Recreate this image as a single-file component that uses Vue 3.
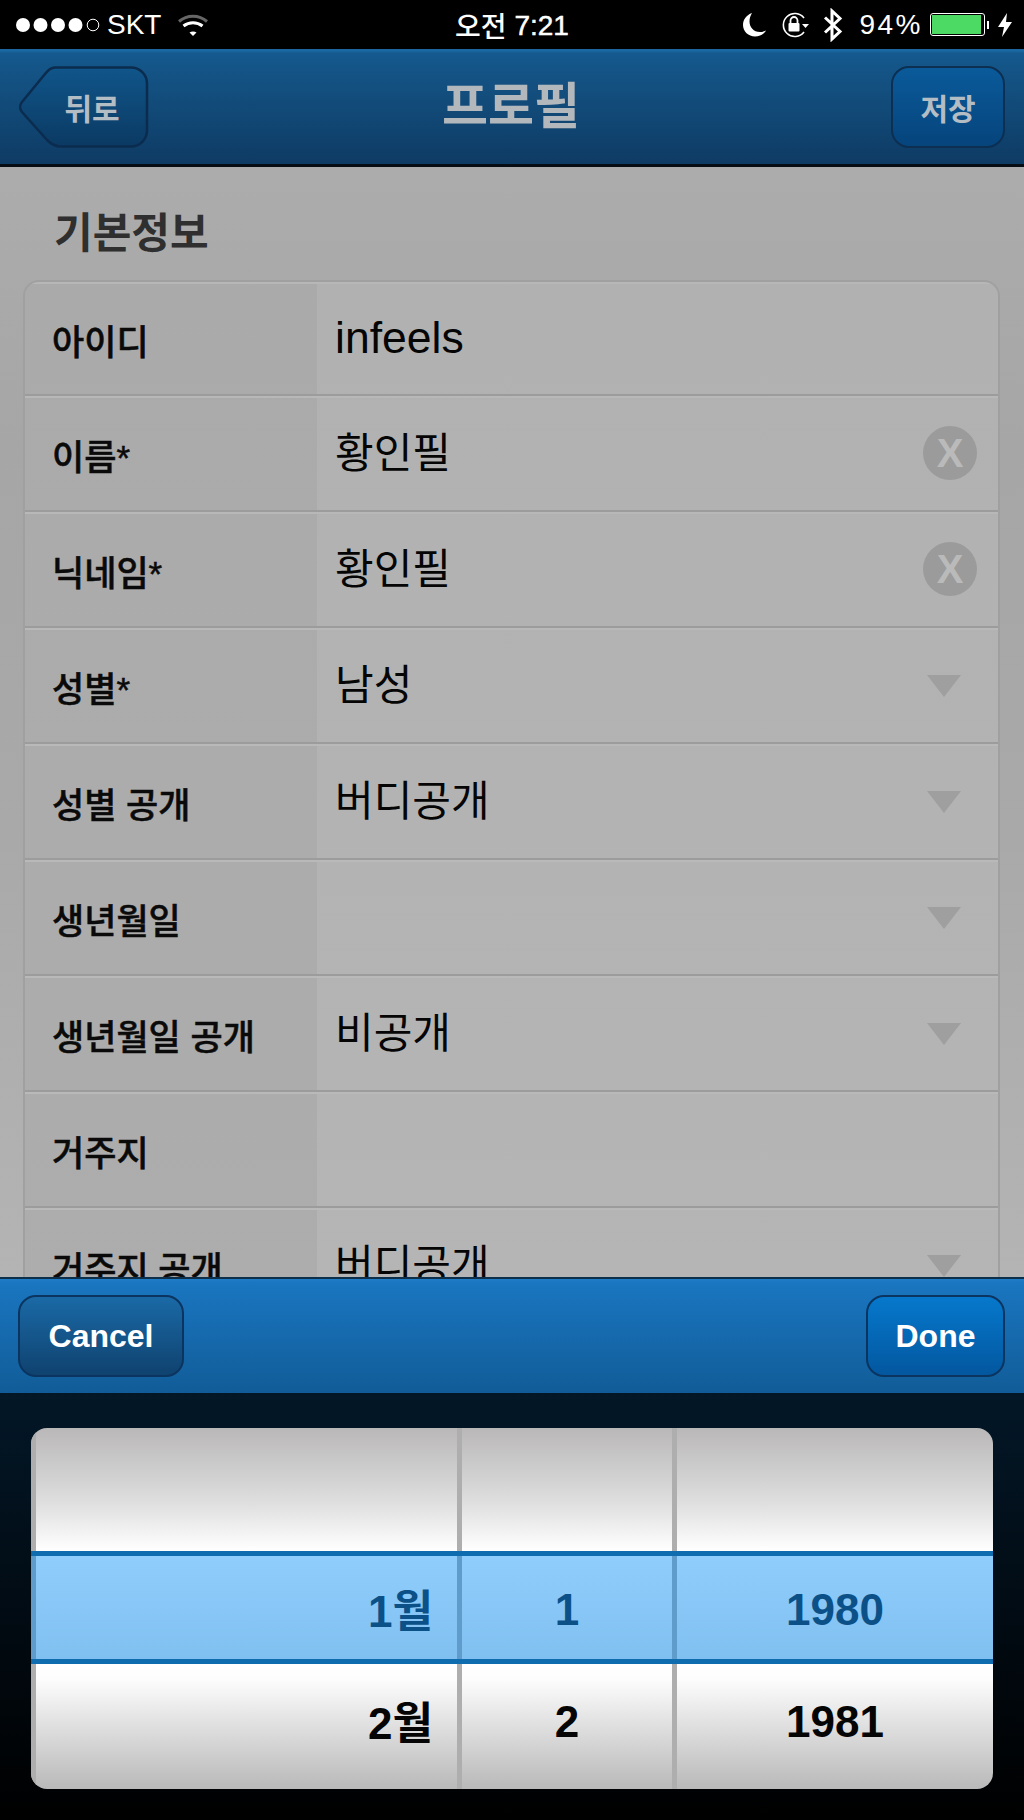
<script setup>
const rows = [
  { label: '아이디', value: 'infeels', latin: true },
  { label: '이름*', value: '황인필', icon: 'clear' },
  { label: '닉네임*', value: '황인필', icon: 'clear' },
  { label: '성별*', value: '남성', icon: 'drop' },
  { label: '성별 공개', value: '버디공개', icon: 'drop' },
  { label: '생년월일', value: '', icon: 'drop' },
  { label: '생년월일 공개', value: '비공개', icon: 'drop' },
  { label: '거주지', value: '' },
  { label: '거주지 공개', value: '버디공개', icon: 'drop' }
]
const pickerRows = [
  { cls: 'top', cells: ['', '', ''] },
  { cls: 'sel', cells: ['1월', '1', '1980'] },
  { cls: 'bottom', cells: ['2월', '2', '1981'] }
]
</script>

<template>
  <div class="screen">
    <header class="status">
      <div class="status-left">
        <svg class="dots" width="86" height="16" viewBox="0 0 86 16">
          <circle cx="7" cy="8" r="7" fill="#fff" />
          <circle cx="24.500" cy="8" r="7" fill="#fff" />
          <circle cx="42" cy="8" r="7" fill="#fff" />
          <circle cx="59.500" cy="8" r="7" fill="#fff" />
          <circle cx="77" cy="8" r="5.800" fill="none" stroke="#fff" stroke-width="1" />
        </svg>
        <span class="carrier">SKT</span>
        <svg class="wifi" width="32" height="24" viewBox="0 0 32 24">
          <path d="M2 8.500C10 1.500 22 1.500 30 8.500" fill="none" stroke="#666" stroke-width="3" />
          <path d="M6.500 13C12 8.500 20 8.500 25.500 13" fill="none" stroke="#fff" stroke-width="3" />
          <path d="M12.500 19.500L16 23L19.500 19.500C17.500 18 14.500 18 12.500 19.500Z" fill="#fff" />
        </svg>
      </div>
      <div class="time">오전 <span class="clock">7:21</span></div>
      <div class="status-right">
        <svg width="24" height="24" viewBox="0 0 24 24">
          <path d="M9 0C3.500 2 0 6.500 0 12C0 18.500 5.500 23.500 12 23.500C17 23.500 21 21 23 17.500C21.500 18.500 19 19 17 19C10.500 19 6.500 14 6.500 8.500C6.500 5 7.500 2.500 9 0Z" fill="#fff" />
        </svg>
        <svg class="lock" width="28" height="26" viewBox="0 0 28 26">
          <path d="M23 6A11.500 11.500 0 1 0 23 20" fill="none" stroke="#fff" stroke-width="1.600" />
          <path d="M21 12L28 12L24.500 16Z" fill="#fff" />
          <rect x="7.500" y="11" width="11" height="8.500" rx="1" fill="#fff" />
          <path d="M9.500 11.500V8.500A3.500 3.500 0 0 1 16.500 8.500V11.500" fill="none" stroke="#fff" stroke-width="1.800" />
        </svg>
        <svg class="bt" width="20" height="34" viewBox="0 0 20 34">
          <path d="M2 9.500L17 23.500L9 31V3L17 10.500L2 24.500" fill="none" stroke="#fff" stroke-width="3" />
        </svg>
        <span class="percent">94%</span>
        <div class="battery"><div class="battery-fill"></div></div>
        <div class="battery-tip"></div>
        <svg class="bolt" width="14" height="24" viewBox="0 0 14 24">
          <path d="M9 0L0 14H6L4 24L14 9H8Z" fill="#fff" />
        </svg>
      </div>
    </header>

    <nav class="nav">
      <button class="btn back">
        <svg class="back-shape" width="130" height="82" viewBox="0 0 130 82">
          <defs>
            <linearGradient id="backFill" x1="0" y1="0" x2="0" y2="1">
              <stop offset="0" stop-color="#10558a" />
              <stop offset="1" stop-color="#0b3a63" />
            </linearGradient>
          </defs>
          <path d="M36 1.500H112A16 16 0 0 1 128 17.500V64.500A16 16 0 0 1 112 80.500H42C36 80.500 32 78 28 74L3 46C0.500 43 0.500 39 3 36L26 8C29 4 32 1.500 36 1.500Z" fill="url(#backFill)" stroke="#0b2c4e" stroke-width="2.500" />
        </svg>
        <span class="back-text">뒤로</span>
      </button>
      <h1 class="title">프로필</h1>
      <button class="btn save">저장</button>
    </nav>

    <main class="content">
      <h2 class="heading">기본정보</h2>
      <section class="card">
        <div v-for="row in rows" :key="row.label" class="row">
          <div class="label">{{ row.label }}</div>
          <div class="value">
            <span class="text" :class="{ latin: row.latin }">{{ row.value }}</span>
            <span v-if="row.icon === 'clear'" class="clear">X</span>
            <span v-if="row.icon === 'drop'" class="drop"></span>
          </div>
        </div>
      </section>
    </main>

    <div class="toolbar">
      <button class="btn cancel">Cancel</button>
      <button class="btn done">Done</button>
    </div>

    <div class="picker">
      <div class="wheel">
        <div v-for="pr in pickerRows" :key="pr.cls" class="wheel-row" :class="pr.cls">
          <div class="cell month">{{ pr.cells[0] }}</div>
          <div class="cell day">{{ pr.cells[1] }}</div>
          <div class="cell year">{{ pr.cells[2] }}</div>
        </div>
      </div>
    </div>
  </div>
</template>

<style>
html, body { margin: 0; background: #000; }
</style>

<style scoped>
.screen {
  width: 1024px;
  height: 1820px;
  display: flex;
  flex-direction: column;
  overflow: hidden;
  font-family: "Liberation Sans", "Noto Sans CJK KR", sans-serif;
}

.status {
  height: 49px;
  flex: none;
  background: #000;
  color: #fff;
  display: grid;
  grid-template-columns: 1fr auto 1fr;
  align-items: center;
}
.status-left {
  display: flex;
  align-items: center;
  padding-left: 16px;
}
.carrier { font-size: 28px; margin-left: 5px; }
.wifi { margin-left: 16px; }
.time { font-size: 28px; font-weight: 500; }
.clock { vertical-align: 2px; -webkit-text-stroke: 0.5px #fff; }
.status-right {
  display: flex;
  align-items: center;
  justify-content: flex-end;
  padding-right: 12px;
}
.lock { margin-left: 14px; }
.bt { margin-left: 14px; }
.percent { font-size: 28px; margin-left: 16px; letter-spacing: 2.500px; }
.battery {
  width: 55px;
  height: 23px;
  margin-left: 7px;
  border: 1px solid #fff;
  border-radius: 3px;
  box-sizing: border-box;
  padding: 1px;
}
.battery-fill { width: 49px; height: 100%; background: #4cd964; }
.battery-tip { width: 2px; height: 8px; background: #fff; margin-left: 2px; }
.bolt { margin-left: 9px; }

.nav {
  height: 115px;
  flex: none;
  box-sizing: content-box;
  border-bottom: 3px solid #060d14;
  background: linear-gradient(#1b67a2 0, #1b67a2 2px, #155a8f 4px, #145486 20px, #0e3b64 100%);
  display: flex;
  align-items: center;
  justify-content: space-between;
  padding: 0 19px;
}
.btn {
  font-family: inherit;
  height: 82px;
  padding: 0;
  box-sizing: border-box;
  cursor: default;
}
.back {
  width: 130px;
  border: 0;
  background: none;
  position: relative;
  color: #b4bcc4;
  font-size: 30px;
  font-weight: 700;
}
.back-shape { position: absolute; left: 0; top: 0; }
.back-text { position: relative; display: block; padding-left: 16px; }
.title {
  margin: 0;
  font-size: 50px;
  font-weight: 700;
  color: #b3b8bd;
  line-height: 1;
  flex: 1;
  text-align: center;
  padding-right: 18px;
}
.save {
  width: 114px;
  border: 2.500px solid #0c2f52;
  border-radius: 18px;
  background: linear-gradient(#0a5a9a, #06447c);
  color: #b4bcc4;
  font-size: 30px;
  font-weight: 700;
}

.content {
  height: 1110px;
  flex: none;
  overflow: hidden;
  background: linear-gradient(#acacac, #a6a6a6 25%, #a9a9a9 60%, #b4b4b4);
}
.heading {
  margin: 0;
  height: 113px;
  box-sizing: border-box;
  padding: 39px 0 0 54px;
  font-size: 42px;
  line-height: 56px;
  font-weight: 700;
  color: #2f2f2f;
}
.card {
  width: 977px;
  margin-left: 23px;
  box-sizing: border-box;
  border: 2px solid #a0a0a0;
  border-bottom: 0;
  border-radius: 16px 16px 0 0;
  overflow: hidden;
  background: linear-gradient(#b1b1b1, #b5b5b5);
}
.row {
  height: 116px;
  box-sizing: border-box;
  border-bottom: 2px solid #9c9c9c;
  border-top: 2px solid rgba(255, 255, 255, 0.08);
  display: grid;
  grid-template-columns: 292px 1fr;
}
.row:first-child { height: 114px; }
.label {
  background: rgba(0, 0, 0, 0.04);
  color: #0a0a0a;
  font-size: 35px;
  font-weight: 500;
  -webkit-text-stroke: 0.5px #0a0a0a;
  padding-left: 27px;
  display: flex;
  align-items: center;
}
.value {
  color: #050505;
  font-size: 42px;
  padding: 0 21px 0 18px;
  display: flex;
  align-items: center;
  justify-content: space-between;
}
.text { margin-bottom: 9px; }
.latin { font-size: 44.500px; margin-bottom: 2px; }
.clear {
  width: 54px;
  height: 54px;
  margin-bottom: 2px;
  border-radius: 50%;
  background: #9b9b9b;
  color: #bababa;
  font-size: 40px;
  font-weight: 700;
  line-height: 54px;
  text-align: center;
}
.drop {
  width: 0;
  height: 0;
  margin-right: 16px;
  border-left: 17px solid transparent;
  border-right: 17px solid transparent;
  border-top: 22px solid #9f9f9f;
}

.toolbar {
  height: 116px;
  flex: none;
  box-sizing: border-box;
  border-top: 2px solid #0e2f4a;
  background: linear-gradient(#1f7cc4 0, #1a76c0 4px, #115c98 100%);
  display: flex;
  align-items: center;
  justify-content: space-between;
  padding: 0 19px 0 18px;
}
.cancel, .done {
  border: 2.500px solid #0b3560;
  border-radius: 18px;
  color: #fff;
  font-size: 32px;
  font-weight: 700;
}
.cancel {
  width: 166px;
  background: linear-gradient(#1a69a6, #0f426f);
}
.done {
  width: 139px;
  background: linear-gradient(#0678cc, #03579f);
}

.picker {
  flex: 1;
  background: linear-gradient(#031727, #000);
  padding: 35px 31px 31px;
}
.wheel {
  height: 361px;
  border-radius: 16px;
  overflow: hidden;
  display: flex;
  flex-direction: column;
}
.wheel-row {
  display: grid;
  grid-template-columns: 426px 215px 1fr;
  box-sizing: border-box;
}
.top {
  height: 123px;
  background: linear-gradient(#b9b7b7, #dedede 60%, #fff);
}
.sel {
  height: 113px;
  border-top: 5px solid #0f6cae;
  border-bottom: 5px solid #0f6cae;
  background: linear-gradient(#8fcdfc, #80c0f0);
  color: #0b5188;
}
.bottom {
  height: 125px;
  background: linear-gradient(#fff, #fdfdfd 12%, #dfdfdf 50%, #b9b9b9);
  color: #050505;
}
.cell {
  display: flex;
  align-items: center;
  justify-content: center;
  font-size: 44px;
  font-weight: 700;
  border-left: 5px solid #aeaeae;
}
.sel .cell { border-left-color: #5f9ccb; padding-top: 4px; }
.bottom .cell { padding-bottom: 10px; }
.month {
  justify-content: flex-end;
  padding-right: 24px;
}
.sel .month { padding-top: 1px; }
.bottom .month { padding-bottom: 13px; }
</style>
